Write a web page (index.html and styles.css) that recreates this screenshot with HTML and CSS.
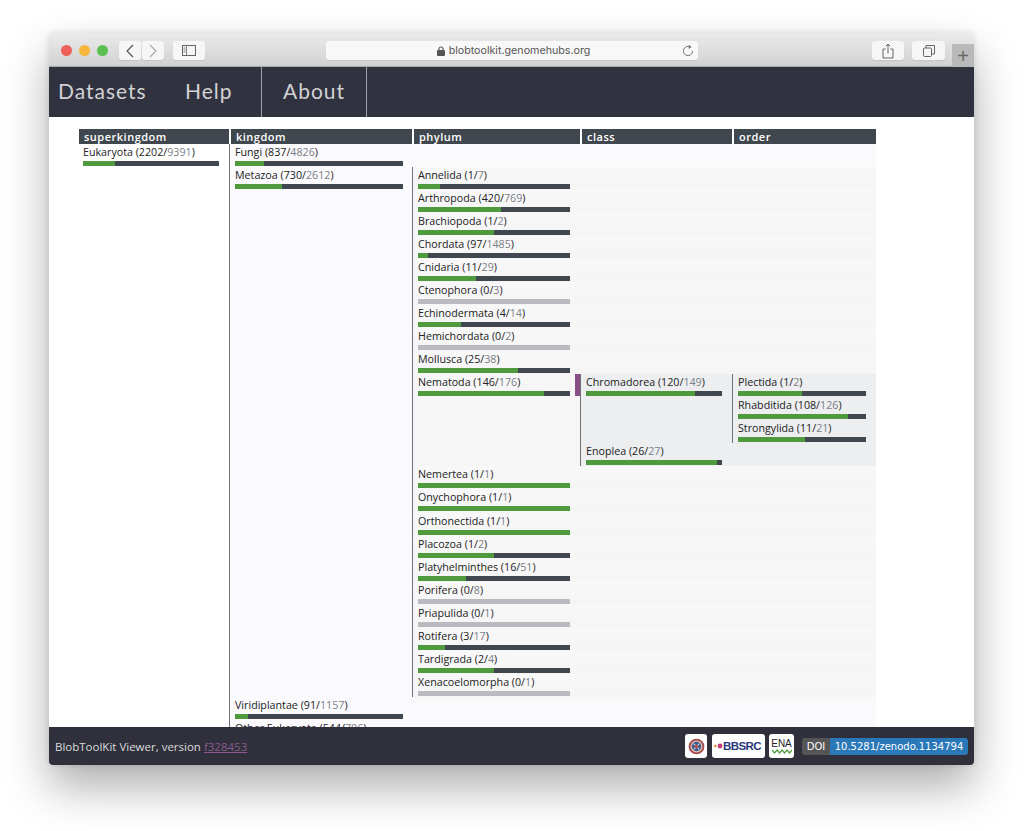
FILE: index.html
```html
<!DOCTYPE html>
<html lang="en">
<head>
  <meta charset="UTF-8">
  <title>BlobToolKit Viewer</title>
  <link rel="stylesheet" href="styles.css">
</head>
<body>

  <div class="window">

    <div class="titlebar">
      <span class="light red"></span>
      <span class="light yellow"></span>
      <span class="light green"></span>

      <span class="tool back">
        <svg width="10" height="14" viewBox="0 0 10 14"><path d="M8 1L2 7l6 6" fill="none" stroke="#555" stroke-width="1.2"/></svg>
      </span>
      <span class="tool forward">
        <svg width="10" height="14" viewBox="0 0 10 14"><path d="M2 1l6 6-6 6" fill="none" stroke="#aaa" stroke-width="1.2"/></svg>
      </span>
      <span class="tool sidebar">
        <svg width="14" height="11" viewBox="0 0 14 11"><rect x=".5" y=".5" width="13" height="10" fill="none" stroke="#666"/><path d="M4.5 0v11M1.5 3h2M1.5 5h2M1.5 7h2" stroke="#666" stroke-width=".8"/></svg>
      </span>

      <div class="address">
        <svg class="lock" width="8" height="10" viewBox="0 0 8 10"><path d="M2 4V3a2 2 0 0 1 4 0v1" fill="none" stroke="#555" stroke-width="1.1"/><rect y="4" width="8" height="6" rx="1" fill="#555"/></svg>
        <span>blobtoolkit.genomehubs.org</span>
        <svg class="reload" width="12" height="13" viewBox="0 0 12 13"><path d="M8.6 3.2A4.6 4.6 0 1 0 10.6 7" fill="none" stroke="#777"/><path d="M6.6 .8l3 2.3-3 2z" fill="#777"/></svg>
      </div>

      <span class="tool share">
        <svg width="12" height="16" viewBox="0 0 12 16"><path d="M3.5 6H1v9h10V6H8.500M6 10.500V1M3.800 3.200L6 1l2.200 2.200" fill="none" stroke="#666"/></svg>
      </span>
      <span class="tool tabs">
        <svg width="12" height="12" viewBox="0 0 12 12"><rect x=".5" y="3" width="8" height="8.500" rx="1" fill="#f4f4f4" stroke="#666"/><path d="M3 3V.5h8.500V9H8.500" fill="none" stroke="#666"/></svg>
      </span>
      <span class="newtab">+</span>
    </div>

    <nav class="topnav">
      <a class="first" href="#">Datasets</a>
      <a class="second" href="#">Help</a>
      <a class="third" href="#">About</a>
    </nav>

    <main class="content">
      <div class="headers">
        <div class="col-sk">superkingdom</div>
        <div class="col-k">kingdom</div>
        <div class="col-p">phylum</div>
        <div class="col-c">class</div>
        <div class="col-o">order</div>
      </div>

      <div class="node">
        <div class="cell cell-sk">
          <div class="label">Eukaryota (2202/<i>9391</i>)</div>
          <div class="bar"><b style="width:23.4%"></b></div>
        </div>
        <div class="kids kids-k">

          <div class="node">
            <div class="cell cell-k">
              <div class="label">Fungi (837/<i>4826</i>)</div>
              <div class="bar"><b style="width:17.3%"></b></div>
            </div>
          </div>

          <div class="node">
            <div class="cell cell-k">
              <div class="label">Metazoa (730/<i>2612</i>)</div>
              <div class="bar"><b style="width:27.9%"></b></div>
            </div>
            <div class="kids kids-p">
              <div class="node"><div class="cell cell-p"><div class="label">Annelida (1/<i>7</i>)</div><div class="bar"><b style="width:14.3%"></b></div></div></div>
              <div class="node"><div class="cell cell-p"><div class="label">Arthropoda (420/<i>769</i>)</div><div class="bar"><b style="width:54.6%"></b></div></div></div>
              <div class="node"><div class="cell cell-p"><div class="label">Brachiopoda (1/<i>2</i>)</div><div class="bar"><b style="width:50%"></b></div></div></div>
              <div class="node"><div class="cell cell-p"><div class="label">Chordata (97/<i>1485</i>)</div><div class="bar"><b style="width:6.5%"></b></div></div></div>
              <div class="node"><div class="cell cell-p"><div class="label">Cnidaria (11/<i>29</i>)</div><div class="bar"><b style="width:37.9%"></b></div></div></div>
              <div class="node"><div class="cell cell-p"><div class="label">Ctenophora (0/<i>3</i>)</div><div class="bar empty"></div></div></div>
              <div class="node"><div class="cell cell-p"><div class="label">Echinodermata (4/<i>14</i>)</div><div class="bar"><b style="width:28.6%"></b></div></div></div>
              <div class="node"><div class="cell cell-p"><div class="label">Hemichordata (0/<i>2</i>)</div><div class="bar empty"></div></div></div>
              <div class="node"><div class="cell cell-p"><div class="label">Mollusca (25/<i>38</i>)</div><div class="bar"><b style="width:65.8%"></b></div></div></div>

              <div class="node node-open">
                <div class="cell cell-p open">
                  <div class="label">Nematoda (146/<i>176</i>)</div>
                  <div class="bar"><b style="width:83%"></b></div>
                </div>
                <div class="kids kids-c">
                  <div class="node">
                    <div class="cell cell-c">
                      <div class="label">Chromadorea (120/<i>149</i>)</div>
                      <div class="bar"><b style="width:80.5%"></b></div>
                    </div>
                    <div class="kids kids-o">
                      <div class="cell cell-o"><div class="label">Plectida (1/<i>2</i>)</div><div class="bar"><b style="width:50%"></b></div></div>
                      <div class="cell cell-o"><div class="label">Rhabditida (108/<i>126</i>)</div><div class="bar"><b style="width:85.7%"></b></div></div>
                      <div class="cell cell-o"><div class="label">Strongylida (11/<i>21</i>)</div><div class="bar"><b style="width:52.4%"></b></div></div>
                    </div>
                  </div>
                  <div class="node">
                    <div class="cell cell-c">
                      <div class="label">Enoplea (26/<i>27</i>)</div>
                      <div class="bar"><b style="width:96.3%"></b></div>
                    </div>
                  </div>
                </div>
              </div>

              <div class="node"><div class="cell cell-p"><div class="label">Nemertea (1/<i>1</i>)</div><div class="bar"><b style="width:100%"></b></div></div></div>
              <div class="node"><div class="cell cell-p"><div class="label">Onychophora (1/<i>1</i>)</div><div class="bar"><b style="width:100%"></b></div></div></div>
              <div class="node"><div class="cell cell-p"><div class="label">Orthonectida (1/<i>1</i>)</div><div class="bar"><b style="width:100%"></b></div></div></div>
              <div class="node"><div class="cell cell-p"><div class="label">Placozoa (1/<i>2</i>)</div><div class="bar"><b style="width:50%"></b></div></div></div>
              <div class="node"><div class="cell cell-p"><div class="label">Platyhelminthes (16/<i>51</i>)</div><div class="bar"><b style="width:31.4%"></b></div></div></div>
              <div class="node"><div class="cell cell-p"><div class="label">Porifera (0/<i>8</i>)</div><div class="bar empty"></div></div></div>
              <div class="node"><div class="cell cell-p"><div class="label">Priapulida (0/<i>1</i>)</div><div class="bar empty"></div></div></div>
              <div class="node"><div class="cell cell-p"><div class="label">Rotifera (3/<i>17</i>)</div><div class="bar"><b style="width:17.6%"></b></div></div></div>
              <div class="node"><div class="cell cell-p"><div class="label">Tardigrada (2/<i>4</i>)</div><div class="bar"><b style="width:50%"></b></div></div></div>
              <div class="node"><div class="cell cell-p"><div class="label">Xenacoelomorpha (0/<i>1</i>)</div><div class="bar empty"></div></div></div>
            </div>
          </div>

          <div class="node">
            <div class="cell cell-k">
              <div class="label">Viridiplantae (91/<i>1157</i>)</div>
              <div class="bar"><b style="width:7.9%"></b></div>
            </div>
          </div>

          <div class="node">
            <div class="cell cell-k">
              <div class="label">Other Eukaryota (544/<i>706</i>)</div>
              <div class="bar"><b style="width:77%"></b></div>
            </div>
          </div>

        </div>
      </div>
    </main>

    <footer class="bottom">
      <div class="version">BlobToolKit Viewer, version <a href="#">f328453</a></div>
      <div class="logos">
        <span class="logo crest">
          <svg width="17" height="17" viewBox="0 0 18 18"><circle cx="9" cy="9" r="8.300" fill="#a8484c"/><circle cx="9" cy="9" r="6.300" fill="#d8c8b8"/><circle cx="9" cy="9" r="5" fill="#3f5a8e"/><path d="M6 6l6 6M12 6l-6 6" stroke="#d8d8e0" stroke-width="1.100"/><circle cx="9" cy="9" r="1.800" fill="#c04a48"/></svg>
        </span>
        <span class="logo bbsrc">
          <svg width="9" height="6" viewBox="0 0 9 6"><circle cx="1.300" cy="3" r="1.200" fill="#e8862c"/><circle cx="6" cy="3" r="2.400" fill="#c43a78"/></svg>
          <span>BBSRC</span>
        </span>
        <span class="logo ena">
          <span>ENA</span>
          <svg width="20" height="6" viewBox="0 0 20 6"><path d="M0 1l2.500 3L5 1l2.500 3L10 1l2.500 3L15 1l2.500 3L20 1" fill="none" stroke="#4f9a3c" stroke-width="1.200"/></svg>
        </span>
        <span class="doi"><span class="doi-key">DOI</span><span class="doi-val">10.5281/zenodo.1134794</span></span>
      </div>
    </footer>

  </div>

</body>
</html>
```

FILE: styles.css
```css
* {
  box-sizing: border-box;
}
html, body {
  height: 100%;
}
body {
  margin: 0;
  padding: 33px 50px 0 49px;
  background-color: #fff;
  overflow: hidden;
  font-family: "Open Sans", "Noto Sans", sans-serif;
  font-size: 10.700px;
  color: #222;
}
.window {
  width: 925px;
  height: 732px;
  display: flex;
  flex-direction: column;
  border-radius: 5px 5px 4px 4px;
  overflow: hidden;
  box-shadow: 0 22px 45px rgba(0, 0, 0, 0.32), 0 0 6px rgba(0, 0, 0, 0.12);
}

/* browser chrome */
.titlebar {
  flex: none;
  height: 34px;
  display: flex;
  align-items: flex-start;
  padding: 8px 0 0 12px;
  background: linear-gradient(#ebebeb, #d1d1d1);
  border-bottom: 1px solid #a9a9a9;
}
.light {
  width: 11px;
  height: 11px;
  border-radius: 50%;
  margin: 4px 7px 0 0;
}
.red { background-color: #f0605a; }
.yellow { background-color: #f6b73c; }
.green { background-color: #5ac14f; }
.tool {
  height: 19px;
  display: flex;
  align-items: center;
  justify-content: center;
  background-color: #f6f6f6;
  border-radius: 3px;
  box-shadow: 0 1px 1px rgba(0, 0, 0, 0.08);
}
.back { width: 22px; margin-left: 4px; }
.forward { width: 22px; margin-left: 1px; }
.sidebar { width: 32px; margin-left: 9px; }
.address {
  width: 372px;
  height: 19px;
  margin-left: 121px;
  padding-left: 3px;
  display: flex;
  align-items: center;
  justify-content: center;
  position: relative;
  gap: 4px;
  background-color: #f8f8f8;
  border-radius: 3px;
  font-family: "Inter", "Liberation Sans", sans-serif;
  font-size: 10.700px;
  color: #555;
  box-shadow: 0 1px 1px rgba(0, 0, 0, 0.08);
}
.reload {
  position: absolute;
  right: 4px;
  top: 3px;
}
.share { width: 32px; margin-left: 174px; }
.tabs { width: 33px; margin-left: 8px; }
.newtab {
  width: 22px;
  height: 23px;
  margin: 3px 0 0 7px;
  background-color: #b9b9b9;
  color: #666;
  font-family: "Liberation Sans", sans-serif;
  font-size: 20px;
  line-height: 25px;
  text-align: center;
}

/* top navigation */
.topnav {
  flex: none;
  height: 50px;
  display: flex;
  background-color: #31323f;
}
.topnav a {
  display: block;
  color: #d2d2d4;
  font-family: "Lato", sans-serif;
  font-size: 21px;
  letter-spacing: 1px;
  line-height: 48px;
  text-decoration: none;
}
.first { padding: 0 0 0 9px; width: 136px; }
.second { width: 77px; border-right: 1px solid #a0a0a8; }
.third { width: 105px; padding-left: 21px; border-right: 1px solid #a0a0a8; }

/* tree table */
.content {
  flex: 1;
  min-height: 0;
  overflow: hidden;
  padding: 12px 0 0 30px;
  background-color: #fff;
}
.headers {
  display: flex;
  gap: 2px;
  height: 15px;
  width: 797px;
}
.headers div {
  background-color: #41474e;
  color: #fff;
  font-weight: 600;
  font-size: 11px;
  line-height: 15px;
  letter-spacing: 0.500px;
  padding-left: 5px;
}
.col-sk { width: 150px; }
.col-k { width: 181px; }
.col-p { width: 166px; }
.col-c { width: 150px; }
.col-o { width: 142px; }

.node {
  display: flex;
}
.kids {
  border-left: 1px solid #6f7278;
}
.kids-k { width: 647px; background-color: #fafafd; }
.kids-p { width: 464px; background-color: #f6f6f6; }
.kids-p > .node {
  background: linear-gradient(#f8f8f9, #f5f5f5);
}
.kids-p > .node-open {
  background: #f6f6f7;
}
.kids-c { width: 296px; background-color: #eceef0; }
.kids-o { width: 144px; }

.cell {
  flex: none;
  height: 23.040px;
}
.cell-sk { width: 150px; padding-left: 4px; background-color: #fff; }
.cell-k { width: 182px; padding-left: 5px; }
.cell-p { width: 167px; padding-left: 5px; position: relative; }
.cell-c { width: 151px; padding-left: 5px; }
.cell-o { width: 143px; padding-left: 5px; }

.open::after {
  content: "";
  position: absolute;
  right: 0;
  top: 0;
  width: 5px;
  height: 22px;
  background-color: #8a4f86;
}
.label {
  height: 17px;
  line-height: 16px;
  white-space: nowrap;
  color: #222;
}
.label i {
  font-style: normal;
  color: #7a7f86;
}
.bar {
  height: 5px;
  background-color: #41474e;
}
.bar b {
  display: block;
  height: 5px;
  background-color: #4f9a3c;
}
.bar.empty {
  background-color: #b9bbc0;
}
.cell-sk .bar { width: 136px; }
.cell-k .bar { width: 168px; }
.cell-p .bar { width: 152px; }
.cell-c .bar { width: 136px; }
.cell-o .bar { width: 128px; }

/* footer */
.bottom {
  flex: none;
  height: 38px;
  display: flex;
  align-items: center;
  justify-content: space-between;
  padding: 0 6px;
  background-color: #2f303c;
  color: #dcdcdc;
  font-size: 11.500px;
  position: relative;
}
.version a {
  color: #8a5a8e;
}
.logos {
  display: flex;
  align-items: center;
}
.logo {
  height: 24px;
  display: flex;
  align-items: center;
  justify-content: center;
  background-color: #fff;
  border-radius: 3px;
}
.crest { width: 22px; }
.bbsrc {
  width: 53px;
  margin-left: 5px;
  padding-right: 2px;
  font-family: "Liberation Sans", sans-serif;
  font-weight: 700;
  font-size: 11.500px;
  letter-spacing: -0.600px;
  color: #2a3a7c;
}
.ena {
  width: 25px;
  margin-left: 4px;
  flex-direction: column;
  font-family: "Liberation Sans", sans-serif;
  font-size: 10px;
  line-height: 11px;
  color: #222;
}
.doi {
  display: flex;
  height: 17px;
  margin-left: 8px;
  border-radius: 3px;
  overflow: hidden;
  font-family: "DejaVu Sans", sans-serif;
  font-size: 10px;
  line-height: 17px;
  color: #fff;
}
.doi-key {
  width: 28px;
  text-align: center;
  background-color: #555;
}
.doi-val {
  width: 138px;
  text-align: center;
  background-color: #2b78b8;
}
```
